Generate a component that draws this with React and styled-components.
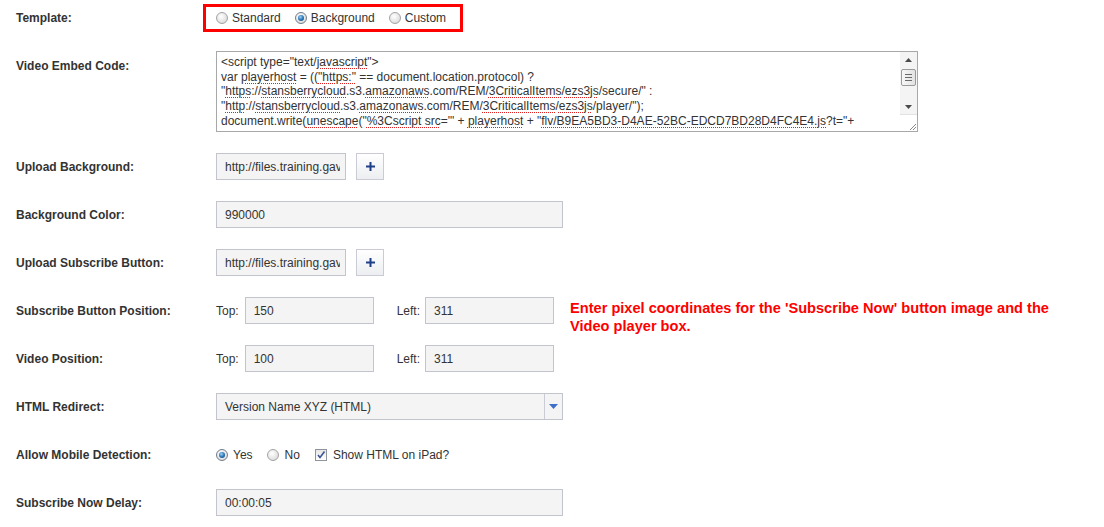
import React from "react";
import styled, { createGlobalStyle } from "styled-components";

const GlobalStyle = createGlobalStyle`
  body {
    margin: 0;
    background: #ffffff;
    font-family: "Liberation Sans", Arial, sans-serif;
    color: #333333;
  }
`;

const Form = styled.div`
  padding-top: 4px;
  width: 1104px;
`;

const Row = styled.div`
  display: flex;
  align-items: ${(p) => (p.$top ? "flex-start" : "center")};
  height: ${(p) => p.$h || 27}px;
  margin-bottom: ${(p) => (p.$gap === undefined ? 21 : p.$gap)}px;
`;

const Label = styled.div`
  width: 216px;
  flex-shrink: 0;
  box-sizing: border-box;
  padding-left: 16px;
  padding-top: ${(p) => (p.$top ? 8 : 0)}px;
  font-size: 12px;
  font-weight: bold;
  color: #333333;
`;

const TemplateBox = styled.div`
  display: flex;
  align-items: center;
  box-sizing: border-box;
  width: 260px;
  height: 28px;
  margin-left: -13px;
  padding-left: 10px;
  border: 3px solid #ff0000;
`;

const Choice = styled.label`
  display: flex;
  align-items: center;
  font-size: 12px;
  color: #333333;
  margin-right: ${(p) => p.$mr || 14}px;
`;

const Radio = styled.span`
  position: relative;
  display: inline-block;
  box-sizing: border-box;
  width: 12px;
  height: 12px;
  margin-right: ${(p) => p.$mr || 4}px;
  border-radius: 50%;
  border: 1px solid ${(p) => (p.$on ? "#6f7c8c" : "#a3a3a3")};
  background: radial-gradient(circle at 40% 35%, #ffffff 0%, #e4e4e4 60%, #cfcfcf 100%);

  &::after {
    content: "";
    display: ${(p) => (p.$on ? "block" : "none")};
    position: absolute;
    left: 2px;
    top: 2px;
    width: 6px;
    height: 6px;
    border-radius: 50%;
    background: radial-gradient(circle at 40% 35%, #9fd3f5 0%, #2b78b8 50%, #0c3966 100%);
  }
`;

const Check = styled.span`
  display: inline-flex;
  align-items: center;
  justify-content: center;
  box-sizing: border-box;
  width: 12px;
  height: 12px;
  margin-right: 6px;
  border: 1px solid #8e939c;
  background: linear-gradient(#e6e6e6, #ffffff);
`;

const CodeBox = styled.div`
  display: flex;
  box-sizing: border-box;
  width: 702px;
  height: 81px;
  border: 1px solid #a8a8a8;
  background: #ffffff;
`;

const CodeText = styled.div`
  flex: 1;
  overflow: hidden;
  padding: 3px 4px;
  font-size: 12px;
  line-height: 14.7px;
  white-space: nowrap;
  color: #333333;
`;

const Spell = styled.span`
  text-decoration: underline dotted #e02020;
  text-decoration-thickness: 1px;
  text-underline-offset: 2px;
`;

const Scroll = styled.div`
  display: flex;
  flex-direction: column;
  width: 17px;
  flex-shrink: 0;
  background: #f4f4f4;
`;

const ScrollArrow = styled.div`
  display: flex;
  align-items: center;
  justify-content: center;
  height: 15px;
`;

const ScrollTrack = styled.div`
  flex: 1;
  display: flex;
  flex-direction: column;
  align-items: center;
  padding-top: 2px;
`;

const Thumb = styled.div`
  display: flex;
  flex-direction: column;
  align-items: center;
  justify-content: center;
  gap: 2px;
  box-sizing: border-box;
  width: 15px;
  height: 17px;
  border: 1px solid #9a9a9a;
  border-radius: 2px;
  background: linear-gradient(90deg, #f7f7f7, #e2e2e2);
`;

const ThumbLine = styled.span`
  display: block;
  width: 7px;
  height: 1px;
  background: #6a6a6a;
`;

const Grip = styled.div`
  display: flex;
  align-items: flex-end;
  justify-content: flex-end;
  height: 16px;
  background: #ffffff;
  border-top: 1px solid #e2e2e2;
`;

const TextInput = styled.input`
  box-sizing: border-box;
  width: ${(p) => p.$w || 347}px;
  height: 27px;
  padding: 0 5px 0 8px;
  margin: 0;
  border: 1px solid #c2c5cd;
  background: #f4f4f4;
  font-family: "Liberation Sans", Arial, sans-serif;
  font-size: 12px;
  color: #333333;
  outline: none;
`;

const PlusButton = styled.button`
  display: flex;
  align-items: center;
  justify-content: center;
  box-sizing: border-box;
  width: 28px;
  height: 27px;
  margin-left: 10px;
  padding: 0;
  border: 1px solid #c9ccd4;
  background: linear-gradient(#ffffff, #eceef1);
`;

const Small = styled.span`
  font-size: 12px;
  color: #333333;
  margin-left: ${(p) => p.$ml || 0}px;
  margin-right: ${(p) => p.$mr || 6}px;
`;

const Hint = styled.div`
  align-self: flex-start;
  margin-top: 2px;
  margin-left: 16px;
  font-size: 14.6px;
  font-weight: bold;
  line-height: 18px;
  color: #ff0000;
  white-space: nowrap;
`;

const Select = styled.div`
  display: flex;
  box-sizing: border-box;
  width: 347px;
  height: 27px;
  border: 1px solid #c2c5cd;
  background: #f4f4f4;
`;

const SelectValue = styled.div`
  flex: 1;
  display: flex;
  align-items: center;
  padding-left: 8px;
  font-size: 12px;
  color: #333333;
`;

const SelectArrow = styled.div`
  display: flex;
  align-items: center;
  justify-content: center;
  width: 17px;
  border-left: 1px solid #c9ccd4;
`;

const Options = styled.div`
  display: flex;
  align-items: center;
`;

function Plus() {
  return (
    <PlusButton>
      <svg width="9" height="9" viewBox="0 0 9 9">
        <rect x="3.5" y="0" width="2" height="9" fill="#1f3f88" />
        <rect x="0" y="3.5" width="9" height="2" fill="#1f3f88" />
      </svg>
    </PlusButton>
  );
}

export default function App() {
  return (
    <>
      <GlobalStyle />
      <Form>
        <Row $h={28} $gap={19}>
          <Label>Template:</Label>
          <TemplateBox>
            <Choice>
              <Radio />
              Standard
            </Choice>
            <Choice>
              <Radio $on />
              Background
            </Choice>
            <Choice>
              <Radio />
              Custom
            </Choice>
          </TemplateBox>
        </Row>

        <Row $top $h={81}>
          <Label $top>Video Embed Code:</Label>
          <CodeBox>
            <CodeText>
              <div>
                &lt;script type="text/<Spell>javascript</Spell>"&gt;
              </div>
              <div>
                var <Spell>playerhost</Spell> = ((<Spell>"https:"</Spell> ==
                document.location.protocol) ?
              </div>
              <div>
                "<Spell>https</Spell>://<Spell>stansberrycloud</Spell>.s3.
                <Spell>amazonaws</Spell>.com/REM/<Spell>3CriticalItems</Spell>/
                <Spell>ezs3js</Spell>/secure/" :
              </div>
              <div>
                "<Spell>http</Spell>://<Spell>stansberrycloud</Spell>.s3.
                <Spell>amazonaws</Spell>.com/REM/<Spell>3CriticalItems</Spell>/
                <Spell>ezs3js</Spell>/player/");
              </div>
              <div>
                document.write(<Spell>unescape</Spell>("<Spell>%3Cscript src</Spell>
                ='" + <Spell>playerhost</Spell> + "
                <Spell>flv/B9EA5BD3-D4AE-52BC-EDCD7BD28D4FC4E4.js</Spell>?t="+
              </div>
            </CodeText>
            <Scroll>
              <ScrollArrow>
                <svg width="7" height="4" viewBox="0 0 7 4">
                  <path d="M3.5 0 L7 4 L0 4 Z" fill="#4a4a4a" />
                </svg>
              </ScrollArrow>
              <ScrollTrack>
                <Thumb>
                  <ThumbLine />
                  <ThumbLine />
                  <ThumbLine />
                </Thumb>
              </ScrollTrack>
              <ScrollArrow>
                <svg width="7" height="4" viewBox="0 0 7 4">
                  <path d="M0 0 L7 0 L3.5 4 Z" fill="#4a4a4a" />
                </svg>
              </ScrollArrow>
              <Grip>
                <svg width="10" height="10" viewBox="0 0 10 10">
                  <path d="M9 3 L3 9 M9 6 L6 9" stroke="#8a8a8a" strokeWidth="1" />
                </svg>
              </Grip>
            </Scroll>
          </CodeBox>
        </Row>

        <Row>
          <Label>Upload Background:</Label>
          <TextInput $w={130} readOnly value="http://files.training.gavilan.com/bg.jpg" />
          <Plus />
        </Row>

        <Row>
          <Label>Background Color:</Label>
          <TextInput readOnly value="990000" />
        </Row>

        <Row>
          <Label>Upload Subscribe Button:</Label>
          <TextInput $w={130} readOnly value="http://files.training.gavilan.com/btn.png" />
          <Plus />
        </Row>

        <Row>
          <Label>Subscribe Button Position:</Label>
          <Small>Top:</Small>
          <TextInput $w={129} readOnly value="150" />
          <Small $ml={23} $mr={5}>
            Left:
          </Small>
          <TextInput $w={129} readOnly value="311" />
          <Hint>
            Enter pixel coordinates for the 'Subscribe Now' button image and the
            <br />
            Video player box.
          </Hint>
        </Row>

        <Row>
          <Label>Video Position:</Label>
          <Small>Top:</Small>
          <TextInput $w={129} readOnly value="100" />
          <Small $ml={23} $mr={5}>
            Left:
          </Small>
          <TextInput $w={129} readOnly value="311" />
        </Row>

        <Row>
          <Label>HTML Redirect:</Label>
          <Select>
            <SelectValue>Version Name XYZ (HTML)</SelectValue>
            <SelectArrow>
              <svg width="9" height="5" viewBox="0 0 9 5">
                <path d="M0 0 L9 0 L4.5 5 Z" fill="#3d6fcb" />
              </svg>
            </SelectArrow>
          </Select>
        </Row>

        <Row>
          <Label>Allow Mobile Detection:</Label>
          <Options>
            <Choice>
              <Radio $on $mr={5} />
              Yes
            </Choice>
            <Choice $mr={15}>
              <Radio $mr={6} />
              No
            </Choice>
            <Choice>
              <Check>
                <svg width="10" height="10" viewBox="0 0 10 10">
                  <path
                    d="M2 5 L4 7.5 L8.5 1.5"
                    stroke="#3a5494"
                    strokeWidth="1.6"
                    fill="none"
                  />
                </svg>
              </Check>
              Show HTML on iPad?
            </Choice>
          </Options>
        </Row>

        <Row>
          <Label>Subscribe Now Delay:</Label>
          <TextInput readOnly value="00:00:05" />
        </Row>
      </Form>
    </>
  );
}
